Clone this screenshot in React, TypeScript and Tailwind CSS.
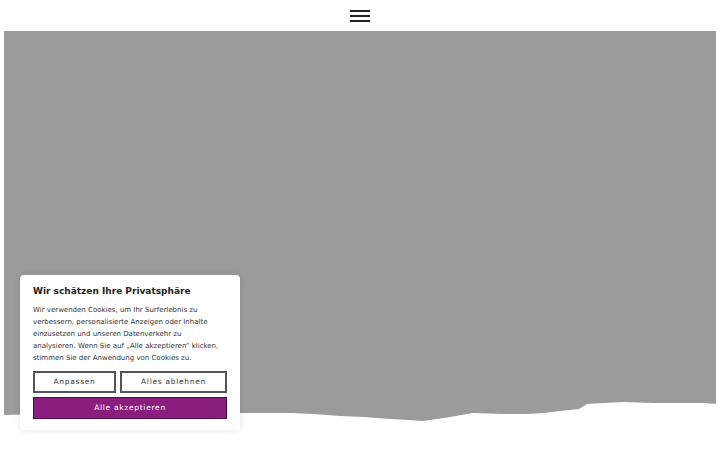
const font = { fontFamily: '"DejaVu Sans", sans-serif' }

function TornEdge() {
  return (
    <svg
      className="absolute bottom-0 left-0 h-[24px] w-full"
      viewBox="0 0 712 24"
      preserveAspectRatio="none"
    >
      <polygon
        fill="#ffffff"
        points="0,24 0,16 40,15 120,14 236,14 286,14 310,15 336,17 360,18 386,20 405,21 419,22 440,19 469,14 500,15 523,15 540,14 556,12 575,10 583,5 600,4 619,3 650,4 676,4 700,4 712,5 712,24"
      />
    </svg>
  )
}

function CookieBanner() {
  return (
    <div
      className="absolute left-[20px] top-[275px] w-[220px] rounded-[4px] bg-white px-[13px] pb-[11px] pt-[10px] shadow-[0_0_6px_rgba(0,0,0,0.12)]"
      style={font}
    >
      <h2 className="text-[9px] font-bold leading-[12px] text-[#222]">Wir schätzen Ihre Privatsphäre</h2>
      <p className="mt-[7px] w-[188px] text-[7px] leading-[12px] text-[#333]">
        Wir verwenden Cookies, um Ihr Surferlebnis zu verbessern, personalisierte Anzeigen oder Inhalte
        einzusetzen und unseren Datenverkehr zu analysieren. Wenn Sie auf „Alle akzeptieren“ klicken,
        stimmen Sie der Anwendung von Cookies zu.
      </p>
      <div className="mt-[7px] flex gap-[4px]">
        <button className="h-[22px] w-[83px] border-2 border-[#555] bg-white text-[7.5px] tracking-[0.7px] text-[#333]">
          Anpassen
        </button>
        <button className="h-[22px] flex-1 border-2 border-[#555] bg-white text-[7.5px] tracking-[0.7px] text-[#333]">
          Alles ablehnen
        </button>
      </div>
      <button className="mt-[4px] h-[22px] w-full border-[1px] border-[#4a1244] bg-[#8a1e7e] text-[7.5px] tracking-[0.7px] text-white">
        Alle akzeptieren
      </button>
    </div>
  )
}

export default function App() {
  return (
    <div className="relative h-[450px] w-[720px] overflow-hidden bg-white">
      <header className="flex h-[31px] items-center justify-center">
        <div className="flex w-[20px] flex-col gap-[3px]">
          <span className="h-[2px] w-full bg-[#222]" />
          <span className="h-[2px] w-full bg-[#222]" />
          <span className="h-[2px] w-full bg-[#222]" />
        </div>
      </header>
      <div className="relative mx-[4px] h-[392px] bg-[#9b9b9b]">
        <TornEdge />
      </div>
      <CookieBanner />
    </div>
  )
}
